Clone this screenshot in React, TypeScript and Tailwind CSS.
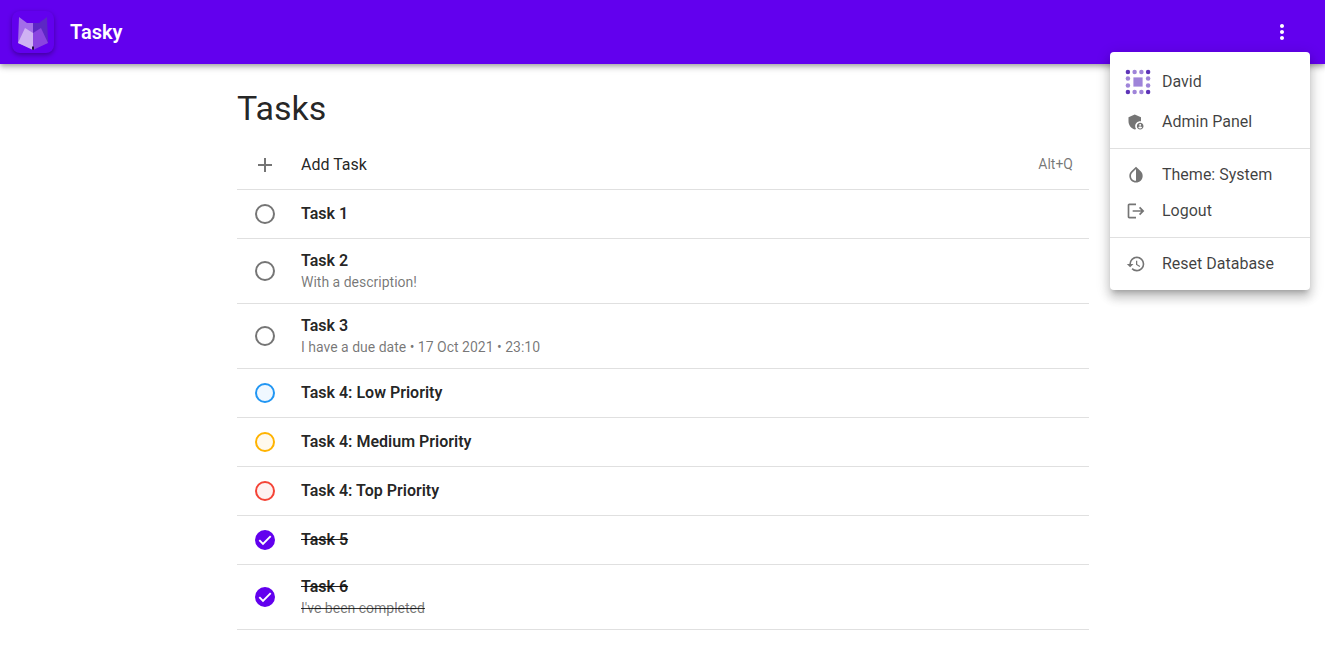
import { useState } from "react";
import type { ReactNode } from "react";
import {
  MdAdd,
  MdAdminPanelSettings,
  MdHistory,
  MdInvertColors,
  MdLogout,
  MdMoreVert,
} from "react-icons/md";

type Priority = "none" | "low" | "medium" | "top";

interface Task {
  id: number;
  title: string;
  details?: string;
  priority: Priority;
  done: boolean;
}

const initialTasks: Task[] = [
  { id: 1, title: "Task 1", priority: "none", done: false },
  { id: 2, title: "Task 2", details: "With a description!", priority: "none", done: false },
  { id: 3, title: "Task 3", details: "I have a due date • 17 Oct 2021 • 23:10", priority: "none", done: false },
  { id: 4, title: "Task 4: Low Priority", priority: "low", done: false },
  { id: 5, title: "Task 4: Medium Priority", priority: "medium", done: false },
  { id: 6, title: "Task 4: Top Priority", priority: "top", done: false },
  { id: 7, title: "Task 5", priority: "none", done: true },
  { id: 8, title: "Task 6", details: "I've been completed", priority: "none", done: true },
];

const ringColours: Record<Priority, string> = {
  none: "border-[#757575]",
  low: "border-[#2196f3] bg-[#f0f8ff]",
  medium: "border-[#ffb300] bg-[#fff9ee]",
  top: "border-[#f44336] bg-[#fef1f0]",
};

function Logo() {
  return (
    <svg
      viewBox="0 0 42 42"
      className="size-[42px] rounded-lg bg-[#6200ee] shadow-[0_2px_5px_rgba(0,0,0,0.35)]"
      aria-hidden="true"
    >
      <path d="M7 6 L15 12 H21 V38 L6 32 Z" fill="#a36de9" />
      <path d="M35 6 L27 12 H21 V38 L36 32 Z" fill="#5c27c4" />
      <path d="M13 17 L21 22 V39 L6 32 Z" fill="#cfb2f3" />
      <path d="M29 17 L21 22 V39 L36 32 Z" fill="#8a45e0" />
      <path d="M20 35.5 H22 V38.6 L21 39 L20 38.6 Z" fill="#22133d" />
    </svg>
  );
}

const dotSteps = [3.9, 10.6, 17.4, 24.1];

function Avatar() {
  return (
    <svg viewBox="0 0 28 28" className="-ml-0.5 size-7" aria-hidden="true">
      {dotSteps.map((y, row) =>
        dotSteps.map((x, col) => {
          const edgeRow = row === 0 || row === 3;
          const edgeCol = col === 0 || col === 3;
          if (!edgeRow && !edgeCol) return null;
          return <circle key={`${row}-${col}`} cx={x} cy={y} r="2.25" fill={edgeRow && edgeCol ? "#5e35b8" : "#9f84d9"} />;
        }),
      )}
      <rect x="9.4" y="9.4" width="9.2" height="9.2" fill="#9f84d9" />
    </svg>
  );
}

function MenuItem({ icon, label, tall = false }: { icon: ReactNode; label: string; tall?: boolean }) {
  return (
    <li role="none">
      <button
        type="button"
        role="menuitem"
        className={`flex w-full items-center px-4 text-left hover:bg-black/5 ${tall ? "h-11" : "h-9"}`}
      >
        <span className="flex w-9 shrink-0 text-xl text-[#757575]">{icon}</span>
        <span className="text-base text-black/75">{label}</span>
      </button>
    </li>
  );
}

function TaskRow({ task, onToggle }: { task: Task; onToggle: () => void }) {
  const id = `task-${task.id}`;
  const strike = task.done ? "line-through" : "";
  return (
    <li className={`flex items-center border-b border-[#e0e0e0] px-4 ${task.details ? "h-[65px]" : "h-[49px]"}`}>
      <span className="relative ml-0.5 mr-[26px] flex shrink-0">
        <input
          id={id}
          type="checkbox"
          checked={task.done}
          onChange={onToggle}
          className={`size-5 cursor-pointer appearance-none rounded-full border-2 checked:border-[#6200ee] checked:bg-[#6200ee] ${ringColours[task.priority]}`}
        />
        {task.done && (
          <svg viewBox="0 0 20 20" className="pointer-events-none absolute inset-0 size-5" aria-hidden="true">
            <path d="M4.3 10.2 L8 13.9 L15.7 6.2" fill="none" stroke="#fff" strokeWidth="1.9" />
          </svg>
        )}
      </span>
      <label htmlFor={id} className="flex cursor-pointer flex-col">
        <span className={`text-base font-semibold ${strike}`}>{task.title}</span>
        {task.details && (
          <span className={`pb-0.5 text-sm leading-[18px] text-black/55 ${strike} decoration-black/80`}>{task.details}</span>
        )}
      </label>
    </li>
  );
}

export default function App() {
  const [tasks, setTasks] = useState(initialTasks);
  const [menuOpen, setMenuOpen] = useState(true);

  const toggle = (id: number) =>
    setTasks((list) => list.map((t) => (t.id === id ? { ...t, done: !t.done } : t)));

  return (
    <div className="min-h-screen bg-white font-[Roboto,sans-serif] text-black/87">
      <header className="relative flex h-16 items-center bg-[#6200ee] pl-3 pr-[23px] text-white shadow-[0_2px_4px_-1px_rgba(0,0,0,0.2),0_4px_5px_rgba(0,0,0,0.14),0_1px_10px_rgba(0,0,0,0.12)]">
        <Logo />
        <span className="ml-4 grow text-xl font-semibold">Tasky</span>
        <button
          type="button"
          aria-label="Menu"
          aria-haspopup="menu"
          aria-expanded={menuOpen}
          onClick={() => setMenuOpen(!menuOpen)}
          className="rounded-full p-2 text-2xl"
        >
          <MdMoreVert />
        </button>
        {menuOpen && (
          <ul
            role="menu"
            className="absolute right-[15px] top-[52px] z-10 w-[200px] rounded bg-white py-2 text-black/87 shadow-[0_5px_5px_-3px_rgba(0,0,0,0.2),0_8px_10px_1px_rgba(0,0,0,0.14),0_3px_14px_2px_rgba(0,0,0,0.12)]"
          >
            <MenuItem icon={<Avatar />} label="David" tall />
            <MenuItem icon={<MdAdminPanelSettings />} label="Admin Panel" />
            <li role="separator" className="my-2 border-t border-[#e0e0e0]" />
            <MenuItem icon={<MdInvertColors />} label="Theme: System" />
            <MenuItem icon={<MdLogout />} label="Logout" />
            <li role="separator" className="my-2 border-t border-[#e0e0e0]" />
            <MenuItem icon={<MdHistory />} label="Reset Database" />
          </ul>
        )}
      </header>

      <main className="mx-auto max-w-[899px] pt-6 pr-[23px] pl-6">
        <h1 className="text-[34px] leading-10">Tasks</h1>
        <div className="pt-3">
          <button
            type="button"
            className="flex h-[50px] w-full items-center border-b border-[#e0e0e0] px-4 text-left"
          >
            <MdAdd className="mr-6 size-6 text-[#757575]" />
            <span className="grow text-base">Add Task</span>
            <kbd className="pb-0.5 font-[Roboto,sans-serif] text-sm leading-[18px] text-black/55">Alt+Q</kbd>
          </button>
          <ul>
            {tasks.map((task) => (
              <TaskRow key={task.id} task={task} onToggle={() => toggle(task.id)} />
            ))}
          </ul>
        </div>
      </main>
    </div>
  );
}
